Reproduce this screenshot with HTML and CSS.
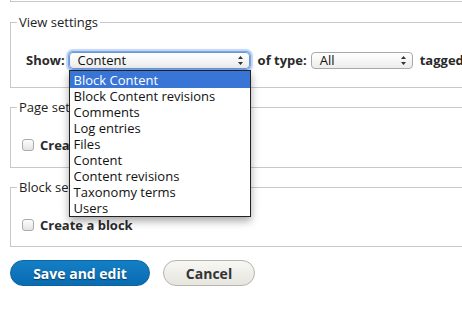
FILE: index.html
```html
<!DOCTYPE html>
<html lang="en">
<head>
    <meta charset="UTF-8">
    <title>Add view</title>
    <link rel="stylesheet" href="styles.css">
</head>
<body>
    <div class="page">
        <div class="prev-edge"></div>

        <fieldset class="group group-view">
            <legend>View settings</legend>
            <div class="show-row">
                <span class="label">Show:</span>
                <div class="select-wrap">
                    <span class="select select-focus select-show">
                        <span class="select-text">Content</span>
                        <svg class="arrows" width="5" height="9" viewBox="0 0 5 9"><path d="M2.5 0 L5 3 L0 3 Z M0 6 L5 6 L2.5 9 Z" fill="#333"/></svg>
                    </span>
                    <ul class="dropdown">
                        <li class="active">Block Content</li>
                        <li>Block Content revisions</li>
                        <li>Comments</li>
                        <li>Log entries</li>
                        <li>Files</li>
                        <li>Content</li>
                        <li>Content revisions</li>
                        <li>Taxonomy terms</li>
                        <li>Users</li>
                    </ul>
                </div>
                <span class="label">of type:</span>
                <span class="select select-type">
                    <span class="select-text">All</span>
                    <svg class="arrows" width="5" height="9" viewBox="0 0 5 9"><path d="M2.5 0 L5 3 L0 3 Z M0 6 L5 6 L2.5 9 Z" fill="#333"/></svg>
                </span>
                <span class="label">tagged with:</span>
            </div>
        </fieldset>

        <fieldset class="group group-page">
            <legend>Page settings</legend>
            <label class="check-row"><input type="checkbox"> Create a page</label>
        </fieldset>

        <fieldset class="group group-block">
            <legend>Block settings</legend>
            <label class="check-row"><input type="checkbox"> Create a block</label>
        </fieldset>

        <div class="actions">
            <button class="btn btn-primary">Save and edit</button>
            <button class="btn">Cancel</button>
        </div>
    </div>
</body>
</html>
```

FILE: styles.css
```css
:root {
    --text: #333;
    --line: #c8c8c8;
    --blue: #0b73bb;
}

body {
    margin: 0;
    background: white;
    font-family: 'Open Sans', 'Liberation Sans', sans-serif;
    font-size: 13px;
    color: var(--text);
    overflow: hidden;
}

.page {
    padding-left: 10px;
    width: 640px;
}

.prev-edge {
    height: 1px;
    border-left: 1px solid var(--line);
    border-bottom: 1px solid var(--line);
}

.group {
    margin: 0;
    border: 1px solid var(--line);
    padding: 22px 0 13px 9px;
}

.group legend {
    margin-left: -3px;
    padding: 0 2px;
    line-height: 16px;
    color: #222;
}

.group-view {
    margin-top: 12px;
    padding-top: 21px;
    padding-bottom: 18px;
}

.group-page,
.group-block {
    margin-top: 11px;
}

.group-page {
    padding-bottom: 14px;
}

.show-row {
    display: flex;
    align-items: center;
    height: 18px;
    padding-left: 6px;
}

.label {
    font-weight: bold;
    color: #2a2a2a;
    white-space: nowrap;
}

.select-wrap {
    position: relative;
    margin-left: 4px;
    margin-right: 8px;
}

.select {
    display: flex;
    align-items: center;
    justify-content: space-between;
    box-sizing: border-box;
    height: 17px;
    padding: 0 6px 0 8px;
    border: 1px solid #a9a9a9;
    border-radius: 4px;
    background: linear-gradient(#ffffff, #ececec);
    line-height: 15px;
    color: #111;
}

.select-show {
    width: 181px;
}

.select-focus {
    border-color: #6c98d8;
    box-shadow: 0 0 0 1px #79a5e4, 0 0 1px 3px rgba(120, 165, 230, 0.45);
}

.select-type {
    width: 102px;
    margin-left: 4px;
    margin-right: 7px;
}

.dropdown {
    position: absolute;
    left: 0;
    top: 18px;
    width: 180px;
    margin: 0;
    padding: 0;
    list-style: none;
    background: white;
    border: 1px solid #222;
    box-shadow: 0 4px 8px rgba(0, 0, 0, 0.35);
    z-index: 2;
}

.dropdown li {
    height: 16px;
    line-height: 16px;
    padding-left: 4px;
    color: #111;
    white-space: nowrap;
}

.dropdown li.active {
    height: 17px;
    line-height: 18px;
    background: #3875d7;
    color: white;
}

.check-row {
    display: flex;
    align-items: center;
    gap: 6px;
    height: 16px;
    padding-left: 2px;
    font-weight: bold;
    color: #2a2a2a;
}

.check-row input {
    appearance: none;
    width: 12px;
    height: 12px;
    margin: 0;
    border: 1px solid #aaa;
    border-radius: 3px;
    background: linear-gradient(#fdfdfd, #e4e4e4);
}

.actions {
    display: flex;
    gap: 13px;
    margin-top: 13px;
}

.btn {
    height: 26px;
    padding: 0 20px;
    border: 1px solid #b5b5ac;
    border-radius: 13px;
    background: linear-gradient(#f7f7f4, #e6e5df);
    font-family: inherit;
    font-size: 14px;
    font-weight: bold;
    color: #333;
    min-width: 92px;
}

.btn-primary {
    width: 140px;
    border-color: #0a64a0;
    background: linear-gradient(#137fc6, #0a6bb1);
    color: white;
    text-shadow: 0 1px 1px rgba(0, 0, 0, 0.5);
}
```
